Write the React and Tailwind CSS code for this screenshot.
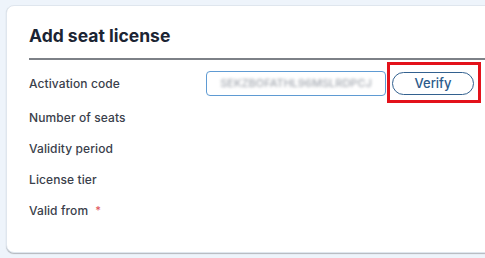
import React from 'react';

const rows = ['Number of seats', 'Validity period', 'License tier'];

export default function App() {
  return (
    <div
      className="w-[485px] h-[258px] overflow-hidden bg-[#eef4fb] pt-[5px] pl-[6px]"
      style={{ fontFamily: 'Inter, "Noto Sans", sans-serif' }}
    >
      {/* card runs off the right edge */}
      <div className="w-[500px] h-[248px] bg-white rounded-[8px] border border-[#dfe6ee] shadow-[0_1px_1px_rgba(0,0,0,0.25)] pl-[22px] pt-[18px]">
        <h2 className="text-[17.5px] leading-[24px] font-bold text-[#1b2433]">
          Add seat license
        </h2>
        <div className="mt-[10px] h-[2px] bg-[#7d8187]" />

        <div className="mt-[11px] h-[25px] flex items-center relative">
          <span className="w-[177px] text-[12px] font-medium text-[#3a404b] tracking-[0.1px]">Activation code</span>
          <div className="w-[180px] h-[25px] rounded-[4px] border border-[#5f9bd3] flex items-center justify-center overflow-hidden">
            <span className="text-[11px] font-medium text-[#a3a8b0] blur-[1.4px]">SEKZBOFATHL96MSLRDPCJ</span>
          </div>
          <button className="ml-[6px] w-[82px] h-[23px] rounded-full border border-[#33618f] text-[13px] font-medium text-[#2c5b8b] flex items-center justify-center">
            Verify
          </button>
          <div className="absolute left-[358px] top-[-9px] w-[94px] h-[41px] border-[3px] border-[#e3121b] pointer-events-none" />
        </div>

        <div className="mt-[6px]">
          {rows.map((r) => (
            <div key={r} className="h-[31px] flex items-center text-[12px] font-medium text-[#3a404b] tracking-[0.1px]">
              {r}
            </div>
          ))}
          <div className="h-[31px] flex items-center text-[12px] font-medium text-[#3a404b] tracking-[0.1px]">
            Valid from
            <span className="ml-[7px] text-[#e0525b] text-[11px]">*</span>
          </div>
        </div>
      </div>
    </div>
  );
}
